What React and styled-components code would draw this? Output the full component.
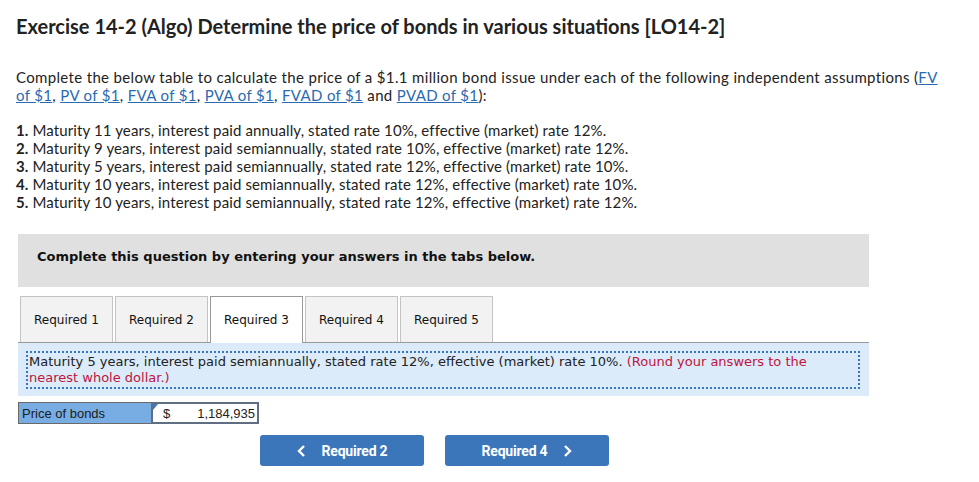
import styled, { createGlobalStyle } from 'styled-components';

const GlobalStyle = createGlobalStyle`
  body {
    margin: 0;
    background: #fff;
    color: #222;
    font-family: Lato, "Liberation Sans", sans-serif;
  }
`

const Page = styled.div`
  padding: 14px 0 0 16px;
  width: 963px;
`

const Title = styled.h1`
  margin: 0;
  font-size: 20px;
  font-weight: 700;
  line-height: 24px;
  color: #222;
`

const Intro = styled.p`
  margin: 30px 0 0;
  width: 930px;
  font-size: 15px;
  line-height: 18px;
  letter-spacing: 0.34px;
  color: #222;
`

const Ref = styled.a`
  color: #2a6ab0;
  text-decoration: underline;
`

const Items = styled.ol`
  list-style: none;
  margin: 17px 0 0;
  padding: 0;
  font-size: 15px;
  line-height: 18px;
  letter-spacing: 0.12px;

  b { font-weight: 700; }
`

const Widget = styled.div`
  margin: 23px 0 0 2px;
  width: 851px;
  font-family: "DejaVu Sans", Verdana, sans-serif;
`

const Notice = styled.div`
  background: #e0e0e0;
  height: 53px;
  box-sizing: border-box;
  display: flex;
  align-items: center;
  padding: 0 0 8px 19px;
  font-size: 13px;
  font-weight: 700;
  color: #111;
`

const TabRow = styled.div`
  display: flex;
  gap: 2px;
  margin-top: 9px;
  padding-left: 2px;
  border-bottom: 1px solid #999;
`

const Tab = styled.div`
  width: 93px;
  box-sizing: border-box;
  display: flex;
  align-items: center;
  justify-content: center;
  font-size: 12px;
  color: #111;
  background: ${p => (p.$active ? '#fff' : '#f2f2f2')};
  border: 1px solid ${p => (p.$active ? '#999' : '#c4c4c4')};
  border-bottom: none;
  margin-bottom: ${p => (p.$active ? '-1px' : '0')};
  height: ${p => (p.$active ? '47px' : '46px')};
`

const Panel = styled.div`
  background: #dbebfa;
  padding: 8px 9px 7px 8px;
`

const Prompt = styled.div`
  border: 2px dotted #3a76c4;
  padding: 1px 40px 1px 1px;
  font-size: 13px;
  line-height: 16px;
  color: #222;
`

const Hint = styled.span`
  color: #c0143c;
`

const PriceRow = styled.div`
  display: flex;
  margin-top: 6px;
  height: 22px;
  font-family: "Liberation Sans", Arial, sans-serif;
  font-size: 13px;
`

const PriceLabel = styled.div`
  width: 133px;
  box-sizing: border-box;
  background: #78ade4;
  border: 1px solid #6a6a6a;
  border-right: none;
  display: flex;
  align-items: center;
  padding-left: 3px;
  color: #1b1b1b;
`

const PriceCell = styled.div`
  position: relative;
  width: 108px;
  box-sizing: border-box;
  background: #fff;
  border: 2px solid #5f6e80;
  display: flex;
  align-items: center;
  justify-content: space-between;
  padding: 0 2px 0 10px;
  color: #222;

  &::before {
    content: '';
    position: absolute;
    left: 0;
    top: 0;
    border-top: 6px solid #3a78c6;
    border-right: 5px solid transparent;
  }
`

const NavRow = styled.div`
  display: flex;
  gap: 21px;
  margin: 11px 0 0 242px;
`

const NavButton = styled.button`
  width: 164px;
  height: 31px;
  border: none;
  border-radius: 3px;
  background: #3b76bb;
  color: #fff;
  font-family: Roboto, "Liberation Sans", sans-serif;
  font-weight: 700;
  font-size: 14px;
  letter-spacing: -0.2px;
  display: flex;
  align-items: center;
  justify-content: center;
  gap: 16px;
  cursor: pointer;
`

const Chevron = ({ left }) => (
  <svg width="9" height="12" viewBox="0 0 9 12">
    <path
      d={left ? 'M7 1 L2 6 L7 11' : 'M2 1 L7 6 L2 11'}
      fill="none"
      stroke="#fff"
      strokeWidth="2.4"
    />
  </svg>
)

const items = [
  'Maturity 11 years, interest paid annually, stated rate 10%, effective (market) rate 12%.',
  'Maturity 9 years, interest paid semiannually, stated rate 10%, effective (market) rate 12%.',
  'Maturity 5 years, interest paid semiannually, stated rate 12%, effective (market) rate 10%.',
  'Maturity 10 years, interest paid semiannually, stated rate 12%, effective (market) rate 10%.',
  'Maturity 10 years, interest paid semiannually, stated rate 12%, effective (market) rate 12%.',
]

const tabs = ['Required 1', 'Required 2', 'Required 3', 'Required 4', 'Required 5']

export default function App() {
  return (
    <>
      <GlobalStyle />
      <Page>
        <Title>Exercise 14-2 (Algo) Determine the price of bonds in various situations [LO14-2]</Title>
        <Intro>
          Complete the below table to calculate the price of a $1.1 million bond issue under each of the following independent assumptions (<Ref>FV of $1</Ref>, <Ref>PV of $1</Ref>, <Ref>FVA of $1</Ref>, <Ref>PVA of $1</Ref>, <Ref>FVAD of $1</Ref> and <Ref>PVAD of $1</Ref>):
        </Intro>
        <Items>
          {items.map((t, i) => (
            <li key={i}><b>{i + 1}.</b> {t}</li>
          ))}
        </Items>

        <Widget>
          <Notice>Complete this question by entering your answers in the tabs below.</Notice>
          <TabRow>
            {tabs.map((t, i) => (
              <Tab key={t} $active={i === 2}>{t}</Tab>
            ))}
          </TabRow>
          <Panel>
            <Prompt>
              Maturity 5 years, interest paid semiannually, stated rate 12%, effective (market) rate 10%. <Hint>(Round your answers to the nearest whole dollar.)</Hint>
            </Prompt>
          </Panel>
          <PriceRow>
            <PriceLabel>Price of bonds</PriceLabel>
            <PriceCell>
              <span>$</span>
              <span>1,184,935</span>
            </PriceCell>
          </PriceRow>
          <NavRow>
            <NavButton><Chevron left /> Required 2</NavButton>
            <NavButton>Required 4 <Chevron /></NavButton>
          </NavRow>
        </Widget>
      </Page>
    </>
  )
}
